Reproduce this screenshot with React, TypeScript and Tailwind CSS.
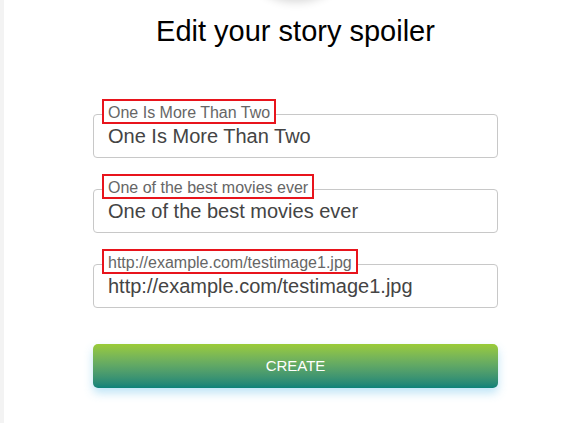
import React from "react";

type Field = { label: string; value: string };

const fields: Field[] = [
  { label: "One Is More Than Two", value: "One Is More Than Two" },
  { label: "One of the best movies ever", value: "One of the best movies ever" },
  { label: "http://example.com/testimage1.jpg", value: "http://example.com/testimage1.jpg" },
];

function OutlinedField({ label, value }: Field) {
  return (
    <div className="relative h-[44px] rounded-[4px] border border-[#c8c8c8] bg-white">
      <span className="absolute left-[8px] top-[-16px] border-2 border-[#e8141c] bg-white px-[4px] pt-[2px] text-[16px] leading-[19px] text-[#666]">
        {label}
      </span>
      <div className="pl-[14px] pt-[9px] text-[20px] leading-[24px] text-[#444]">{value}</div>
    </div>
  );
}

export default function App() {
  return (
    <div
      className="flex h-[423px] w-[585px] overflow-hidden bg-white"
      style={{ fontFamily: '"Liberation Sans", Arial, sans-serif' }}
    >
      <div className="w-[4px] shrink-0 bg-[#f3f3f3]" />
      <main className="flex flex-1 flex-col items-center pl-[2px]">
        <div className="mt-[-131px] h-[130px] w-[120px] shrink-0 rounded-full bg-white shadow-[0_3px_10px_rgba(0,0,0,0.16)]" />
        <h1 className="mt-[16px] text-[29px] leading-[32px] text-black">Edit your story spoiler</h1>
        <form className="mt-[67px] flex w-[405px] flex-col gap-[31px]">
          {fields.map((f) => (
            <OutlinedField key={f.label} {...f} />
          ))}
          <button
            type="button"
            className="mt-[5px] h-[44px] rounded-[5px] bg-gradient-to-b from-[#9acb36] to-[#0b8279] text-[15px] text-white shadow-[0_5px_10px_rgba(110,195,235,0.45)]"
          >
            CREATE
          </button>
        </form>
      </main>
    </div>
  );
}
